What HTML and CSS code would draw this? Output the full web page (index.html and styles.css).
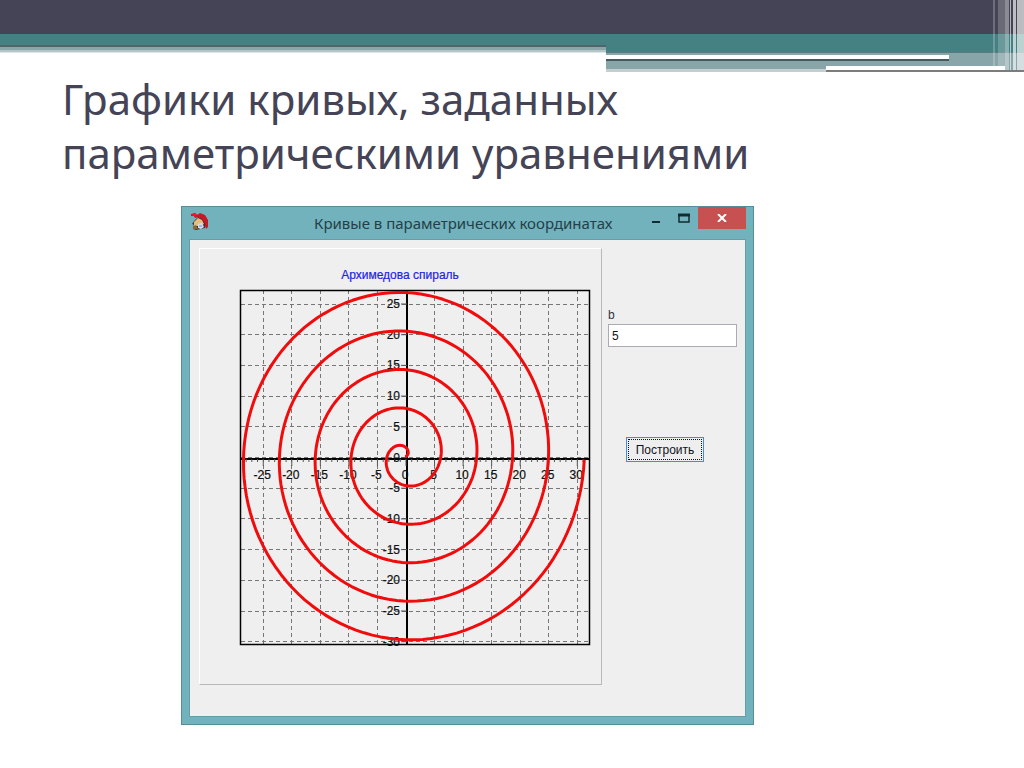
FILE: index.html
```html
<!DOCTYPE html>
<html lang="ru">
<head>
<meta charset="utf-8">
<title>Графики кривых, заданных параметрическими уравнениями</title>
<link rel="stylesheet" href="styles.css">
</head>
<body>
<header class="band">
  <svg class="band-art" viewBox="0 0 1024 72" preserveAspectRatio="none" shape-rendering="crispEdges" aria-hidden="true">
    <rect width="1024" height="34" fill="#444456"/>
    <rect y="34" width="1024" height="12" fill="#458083"/>
    <rect y="45" width="606" height="2" fill="#4f6668"/>
    <rect y="47" width="606" height="3" fill="#8aa6a8"/>
    <rect y="50" width="606" height="2" fill="#b5c5c6"/>
    <rect y="52" width="606" height="1" fill="#dfe6e6"/>
    <rect x="606" y="45" width="418" height="7" fill="#458083"/>
    <rect x="606" y="52" width="418" height="1" fill="#5b7c7e"/>
    <rect x="606" y="53" width="418" height="17" fill="#88a5a9"/>
    <rect x="606" y="55" width="343" height="4" fill="#fff"/>
    <rect x="606" y="59" width="343" height="2" fill="#48595c"/>
    <rect x="606" y="69" width="220" height="3" fill="#c5cfd0"/>
    <rect x="826" y="66" width="179" height="4" fill="#fff"/>
    <rect x="826" y="70" width="198" height="2" fill="#7d7b7b"/>
    <g fill="#fff">
      <rect x="993" width="2" height="66" opacity=".22"/>
      <rect x="998" width="7" height="66" opacity=".2"/>
      <rect x="1005" width="4" height="70" opacity=".38"/>
      <rect x="1010" width="1" height="70" opacity=".6"/>
      <rect x="1013" width="3" height="70" opacity=".65"/>
      <rect x="1017" width="7" height="70" opacity=".64"/>
    </g>
  </svg>
</header>
<main class="slide">
  <h1 class="heading">Графики кривых, заданных параметрическими уравнениями</h1>
  <section class="window" aria-labelledby="window-title">
    <div class="titlebar">
      <svg class="app-icon" viewBox="0 0 20 20" aria-hidden="true">
        <path d="M5 8L8 5L14 6L17 11L15 16L6 18L3 17L4 13L2 12Z" fill="#4d302b"/>
        <path d="M4 10L8 6L12 8L14 12L10 14L4 14Z" fill="#e5bd83"/>
        <path d="M1 2L5 1L7 3L10 1L15 3L18 8L18 15L16 17L15 11L12 7L8 5L5 6L4 4L1 4Z" fill="#c91825"/>
        <path d="M4 1L7 2L5 5L2 3Z" fill="#f51622"/>
        <path d="M8 12L12 11L14 15L11 17L8 16Z" fill="#d4dcf0"/>
        <path d="M9 14H12" stroke="#8085c4"/>
        <path d="M3 14L6 13L8 17L3 17Z" fill="#8b6935"/>
      </svg>
      <h2 class="window-title" id="window-title">Кривые в параметрических координатах</h2>
      <div class="controls">
        <button class="control" type="button" aria-label="Свернуть"><svg width="10" height="10" viewBox="0 0 10 10"><path d="M1 9H9" stroke="#132c33" stroke-width="2"/></svg></button>
        <button class="control" type="button" aria-label="Развернуть"><svg width="12" height="10" viewBox="0 0 12 10"><path d="M1 1V9H11V1" fill="none" stroke="#132c33" stroke-width="1.5"/><path d="M0 2H12" stroke="#132c33" stroke-width="3"/></svg></button>
        <button class="control close" type="button" aria-label="Закрыть"><svg width="10" height="8" viewBox="0 0 10 8"><path d="M1 0L9 8M9 0L1 8" stroke="#fff" stroke-width="2"/></svg></button>
      </div>
    </div>
    <div class="client">
      <div class="panel">
        <svg class="chart" viewBox="200 249 401 435" role="img" aria-label="Архимедова спираль">
          <text class="chart-title" x="400" y="279">Архимедова спираль</text>
          <g id="grid" class="grid"></g>
          <path class="axis" d="M241 459H589M407 290V644"/>
          <path id="ticks" class="ticks"/>
          <g id="labels" class="labels"></g>
          <rect class="frame" x="240.5" y="290.5" width="349" height="354"/>
          <path id="spiral" class="spiral"/>
        </svg>
      </div>
      <form class="side">
        <label class="label" for="b">b</label>
        <input class="field" id="b" type="text" value="5">
        <button class="build" type="button"><span class="build-text">Построить</span></button>
      </form>
    </div>
  </section>
</main>
<script src="chart.js"></script>
</body>
</html>
```
FILE: styles.css
```css
* { box-sizing: border-box; }
body { margin: 0; background: #fff; font-family: "Liberation Sans", sans-serif; }
.band-art { display: block; width: 100%; height: 72px; }
.slide { padding: 0 62px; }
.heading {
  margin: 0;
  max-width: 760px;
  font: 400 42px/54px "Noto Sans", sans-serif;
  color: #444456;
}
.window {
  max-width: 573px;
  margin: 26px 0 0 119px;
  padding: 0 7px 7px;
  border: 1px solid #568d98;
  background: #72b2bd;
}
.titlebar { display: flex; align-items: flex-start; height: 32px; }
.app-icon { width: 20px; height: 20px; margin: 5px 0 0 1px; }
.window-title {
  flex: 1;
  margin: 5px 0 0 104px;
  font: 400 15px/22px "Noto Sans", sans-serif;
  color: #243f48;
  white-space: nowrap;
}
.controls { display: flex; }
.control {
  display: grid;
  place-items: center;
  width: 28px;
  height: 22px;
  padding: 0;
  border: 0;
  background: none;
}
.close { width: 48px; background: #c75050; }
.client {
  display: flex;
  min-height: 478px;
  padding: 8px 8px 31px 9px;
  border: 1px solid #659da8;
  background: #efefef;
}
.panel {
  flex: 1;
  max-width: 403px;
  border: 1px solid;
  border-color: #fff #b9b9b9 #b9b9b9 #fff;
}
.chart { display: block; width: 100%; }
.chart-title { font-size: 12px; fill: #2222e8; stroke: #2222e8; stroke-width: 0.2; text-anchor: middle; }
.grid path { stroke: #777; stroke-dasharray: 4 3; fill: none; shape-rendering: crispEdges; }
.axis { stroke: #000; stroke-width: 2; }
.ticks { stroke: #555; }
.labels { font-size: 12px; fill: #111; stroke: #111; stroke-width: 0.2; }
.label-x { text-anchor: middle; }
.label-y { text-anchor: end; }
.frame { fill: none; stroke: #000; stroke-width: 1.5; }
.spiral { fill: none; stroke: #f00c0c; stroke-width: 3; stroke-linejoin: round; }
.side {
  display: flex;
  flex-direction: column;
  width: 129px;
  margin-left: 6px;
  padding-top: 59px;
}
.label { font-size: 12px; line-height: 16px; color: #334; }
.field {
  width: 100%;
  height: 23px;
  margin-top: 1px;
  padding: 0 3px;
  border: 1px solid #aaacb2;
  background: #fff;
  font: 12px "Liberation Sans", sans-serif;
  color: #112;
}
.build {
  width: 78px;
  height: 25px;
  margin: 90px 0 0 18px;
  padding: 1px;
  border: 1px solid #3c90e0;
  background: #eee;
  font: 12px "Liberation Sans", sans-serif;
  color: #112;
}
.build-text {
  display: grid;
  place-items: center;
  height: 100%;
  border: 1px dotted #111;
}
```
FILE: chart.js
```js
const origin = { x: 406, y: 457.5 };
const scale = { x: 5.71, y: 6.14 };
const svgNS = "http://www.w3.org/2000/svg";

function px(x) { return origin.x + x * scale.x; }
function py(y) { return origin.y - y * scale.y; }

function line(d) {
  const path = document.createElementNS(svgNS, "path");
  path.setAttribute("d", d);
  document.getElementById("grid").append(path);
}

function label(value, x, y, cls) {
  const text = document.createElementNS(svgNS, "text");
  text.setAttribute("x", x);
  text.setAttribute("y", y);
  text.setAttribute("class", cls);
  text.textContent = value;
  document.getElementById("labels").append(text);
}

for (let v = -25; v <= 30; v += 5) {
  line(`M${px(v)} 290V644`);
  label(v, px(v) - 1, 479, "label-x");
}
for (let v = -30; v <= 25; v += 5) {
  line(`M241 ${py(v)}H589`);
  label(v, 400, py(v) + 4, "label-y");
}

let ticks = "";
for (let v = -28; v <= 31; v++) {
  ticks += `M${px(v)} 459v${v % 5 ? 3 : 7}`;
}
for (let v = -30; v <= 25; v += 5) {
  ticks += `M407 ${py(v)}h-6`;
}
document.getElementById("ticks").setAttribute("d", ticks);

const points = [];
for (let t = 0; t <= 10 * Math.PI; t += 0.05) {
  points.push(`${(px(t * Math.cos(t)) - 1).toFixed(1)} ${(py(t * Math.sin(t)) - 1).toFixed(1)}`);
}
document.getElementById("spiral").setAttribute("d", "M" + points.join("L"));
```
